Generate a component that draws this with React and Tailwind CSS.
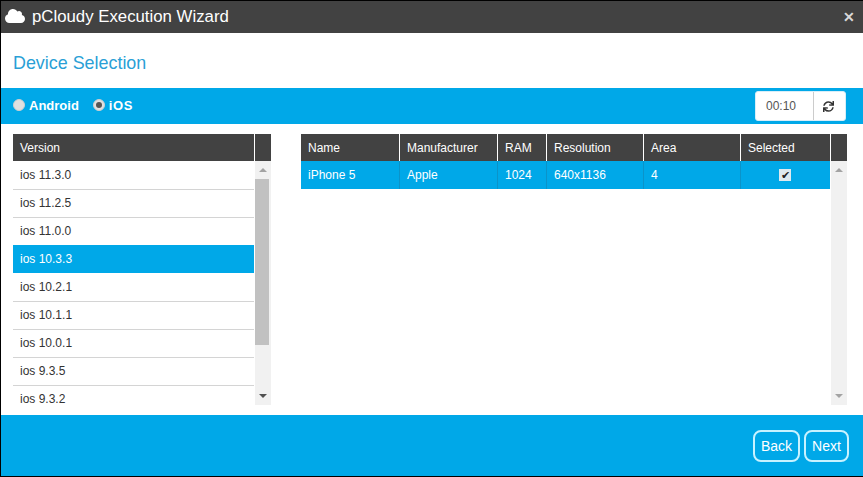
import { useState } from "react";
import { FaCloud, FaSync } from "react-icons/fa";

const VERSIONS = ["11.3.0", "11.2.5", "11.0.0", "10.3.3", "10.2.1", "10.1.1", "10.0.1", "9.3.5", "9.3.2"];

const COLUMNS = [
  { label: "Name", value: "iPhone 5", width: "w-[99px]" },
  { label: "Manufacturer", value: "Apple", width: "w-[98px]" },
  { label: "RAM", value: "1024", width: "w-[49px]" },
  { label: "Resolution", value: "640x1136", width: "w-[97px]" },
  { label: "Area", value: "4", width: "w-[97px]" },
];

const Scrollbar = ({ thumb }) => (
  <div className="w-[16px] h-full bg-[#f1f1f1] flex flex-col items-center shrink-0">
    <div className="h-[18px] w-full shrink-0 flex items-center justify-center">
      <div className="w-0 h-0 border-x-[4px] border-x-transparent border-b-[4px] border-b-[#a3a3a3]" />
    </div>
    <div className="flex-1 w-full">
      {thumb && <div className="h-[166px] w-[14px] bg-[#c1c1c1]" />}
    </div>
    <div className="h-[19px] w-full shrink-0 flex items-center justify-center">
      <div className={`w-0 h-0 border-x-[4px] border-x-transparent border-t-[4px] ${thumb ? "border-t-[#505050]" : "border-t-[#a3a3a3]"}`} />
    </div>
  </div>
);

const rowClass = (v, i) => {
  if (v === "10.3.3") return "bg-[#00a8e8] text-white border-[#00a8e8]";
  // the row under the selected one has no visible line
  if (v === "10.2.1") return "border-white";
  return i === 0 ? "border-white" : "border-[#d4d4d4]";
};

const App = () => {
  const [platform, setPlatform] = useState("ios");

  return (
    <div className="w-[863px] h-[477px] bg-black pl-px pt-px pb-px flex flex-col font-['Liberation_Sans',Arial,sans-serif] overflow-hidden">
      <div className="h-[32px] shrink-0 bg-[#424242] flex items-center pl-[4px] pr-[8px] text-white">
        <FaCloud size={20} className="mr-[7px] mb-[2px]" />
        <span className="text-[16.8px] leading-none">pCloudy Execution Wizard</span>
        <span className="ml-auto text-[14px] font-bold leading-none text-[#d9d9d9]">✕</span>
      </div>

      <div className="h-[55px] shrink-0 bg-white flex items-center pl-[12px]">
        <h2 className="text-[17.9px] leading-none text-[#2a9fd6] pt-[6px]">Device Selection</h2>
      </div>

      <div className="h-[36px] shrink-0 bg-[#00a8e8] flex items-center pl-[12px] pr-[17px] text-white text-[13px] font-bold">
        <label className="flex items-center cursor-pointer" onClick={() => setPlatform("android")}>
          <span className="w-[12px] h-[12px] rounded-full bg-[#e0e0e0] border border-[#cfcfcf] flex items-center justify-center mb-[3px]">
            {platform === "android" && <span className="w-[6px] h-[6px] rounded-full bg-[#555]" />}
          </span>
          <span className="ml-[4px]">Android</span>
        </label>
        <label className="flex items-center cursor-pointer ml-[14px]" onClick={() => setPlatform("ios")}>
          <span className="w-[12px] h-[12px] rounded-full bg-[#e0e0e0] border border-[#cfcfcf] flex items-center justify-center mb-[3px]">
            {platform === "ios" && <span className="w-[6px] h-[6px] rounded-full bg-[#555]" />}
          </span>
          <span className="ml-[4px] tracking-[0.6px]">iOS</span>
        </label>
        <div className="ml-auto h-[30px] w-[91px] bg-white rounded-[3px] border border-[#d8eef8] flex items-center text-[12px] font-normal text-[#555]">
          <span className="flex-1 pl-[10px]">00:10</span>
          <span className="w-[32px] h-full border-l border-[#ccc] flex items-center justify-center text-[#333] pr-[2px]">
            <FaSync size={11} />
          </span>
        </div>
      </div>

      <div className="flex-1 min-h-0 bg-white flex pl-[12px] pr-[16px] pt-[10px] pb-[10px] text-[12px]">
        <div className="w-[258px] shrink-0 h-full flex flex-col">
          <div className="h-[27px] shrink-0 bg-[#424242] text-white flex">
            <div className="w-[242px] border-r border-white flex items-center pl-[7px]">Version</div>
          </div>
          <div className="flex-1 min-h-0 flex">
            <div className="flex-1 overflow-hidden text-[#333] pr-px">
              {VERSIONS.map((v, i) => (
                <div key={v} className={`h-[28px] flex items-center pl-[7px] pb-px border-t ${rowClass(v, i)}`}>
                  ios {v}
                </div>
              ))}
            </div>
            <Scrollbar thumb />
          </div>
        </div>

        <div className="ml-[30px] flex-1 h-full flex flex-col">
          <div className="h-[27px] shrink-0 bg-[#424242] text-white flex">
            {COLUMNS.map((c) => (
              <div key={c.label} className={`${c.width} border-r border-white flex items-center pl-[7px]`}>
                {c.label}
              </div>
            ))}
            <div className="w-[90px] border-r border-white flex items-center pl-[7px]">Selected</div>
          </div>
          <div className="flex-1 min-h-0 flex">
            <div className="flex-1 pr-px">
              <div className="h-[28px] bg-[#00a8e8] text-white flex">
                {COLUMNS.map((c) => (
                  <div key={c.label} className={`${c.width} border-r border-[#0b93c9] flex items-center pl-[7px]`}>
                    {c.value}
                  </div>
                ))}
                <div className="flex-1 flex items-center justify-center pr-px">
                  <span className="w-[12px] h-[12px] bg-[#dfe9ef] flex items-center justify-center text-[#222] text-[11px] leading-none">✔</span>
                </div>
              </div>
            </div>
            <Scrollbar />
          </div>
        </div>
      </div>

      <div className="h-[61px] shrink-0 bg-[#00a8e8] flex items-center justify-end pr-[14px] gap-[4px] pt-[1px] text-white text-[14px]">
        <button className="w-[47px] h-[32px] rounded-[8px] border-2 border-[#c8f2ff]">Back</button>
        <button className="w-[45px] h-[32px] rounded-[8px] border-2 border-[#c8f2ff]">Next</button>
      </div>
    </div>
  );
};

export default App;
